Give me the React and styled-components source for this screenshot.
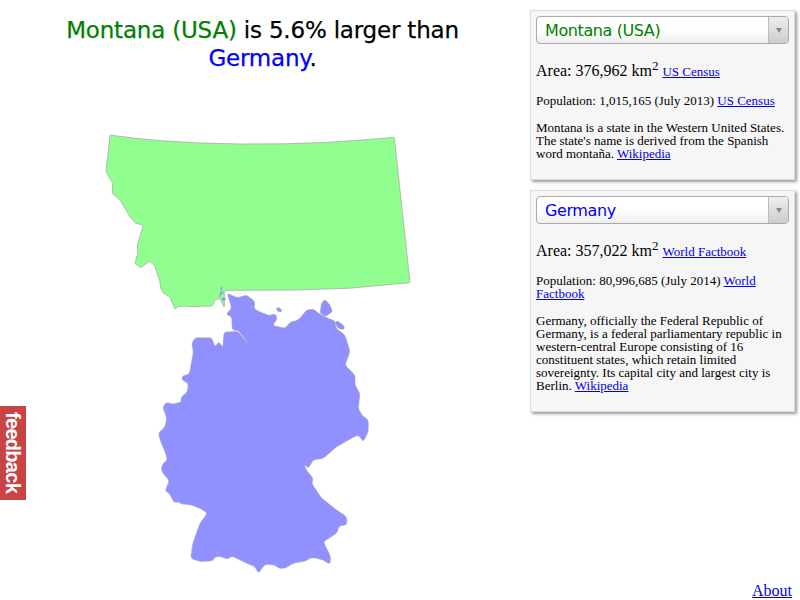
import React from "react";
import styled, { createGlobalStyle } from "styled-components";

const Global = createGlobalStyle`
  html, body { margin: 0; padding: 0; background: #fff; }
  body { font-family: "Liberation Serif", "Times New Roman", serif; color: #000; overflow: hidden; }
`;
const Page = styled.div`
  position: relative;
  width: 800px;
  height: 600px;
  display: flex;
  flex-direction: column;
`;
const Main = styled.div`
  flex: 1;
  min-height: 0;
  display: flex;
  align-items: flex-start;
`;
const MapColumn = styled.div`
  width: 525px;
  flex: none;
`;
const Heading = styled.h1`
  margin: 0;
  padding: 16px 30px 0;
  height: 84px;
  box-sizing: border-box;
  text-align: center;
  font: normal 23px/28px "DejaVu Sans", sans-serif;
  letter-spacing: -0.2px;
  -webkit-text-stroke: 0.25px currentColor;
`;
const Name = styled.span`
  color: ${(p) => p.$color};
`;
const MapSvg = styled.svg`
  display: block;
  width: 525px;
  height: 500px;
`;
const Sidebar = styled.div`
  flex: none;
  width: 265px;
  padding-top: 10px;
  margin-left: 5px;
  display: flex;
  flex-direction: column;
  gap: 10px;
`;
const Panel = styled.section`
  box-sizing: border-box;
  width: 265px;
  height: ${(p) => p.$height}px;
  padding: 5px;
  background: #f6f6f6;
  border: 1px solid #ddd;
  box-shadow: 2px 2px 3px #999;
`;
const Select = styled.div`
  box-sizing: border-box;
  height: 28px;
  display: flex;
  border: 1px solid #aaa;
  border-radius: 4px;
  background: linear-gradient(#fff 50%, #eee);
  overflow: hidden;
`;
const SelectLabel = styled.span`
  flex: 1;
  padding-left: 8px;
  font: 16px/27px "DejaVu Sans", sans-serif;
  letter-spacing: -0.4px;
  color: ${(p) => p.$color};
`;
const SelectArrow = styled.span`
  flex: none;
  width: 19px;
  border-left: 1px solid #bbb;
  background: linear-gradient(#eee, #ccc);
  display: flex;
  align-items: center;
  justify-content: center;
  &::after {
    content: "";
    border-left: 3px solid transparent;
    border-right: 3px solid transparent;
    border-top: 5px solid #888;
  }
`;
const Area = styled.p`
  margin: 18px 0 0;
  font-size: 16px;
  line-height: 18px;
  sup { font-size: 13px; line-height: 0; }
  a { font-size: 13px; }
`;
const Text = styled.p`
  margin: ${(p) => p.$top}px 0 0;
  font-size: 13px;
  line-height: 13px;
`;
const Link = styled.a`
  color: #00e;
  text-decoration: underline;
`;
const Footer = styled.div`
  flex: none;
  height: 20px;
  padding-right: 8px;
  text-align: right;
  font-size: 16px;
  line-height: 22px;
`;
const FeedbackTab = styled.a`
  position: absolute;
  left: 0;
  top: 406px;
  width: 26px;
  height: 94px;
  background: #c84444;
  color: #fff;
  font: bold 20px/26px "Liberation Sans", sans-serif;
  letter-spacing: -0.7px;
  text-align: center;
  writing-mode: vertical-rl;
`;

const parse = (s) => s.trim().split(/\s+/).map((p) => p.split(",").map(Number));
// Closed outline whose corners are rounded by at most r, as on the reference's anti-aliased coast lines.
const outline = (s, r) => {
  const pts = parse(s);
  const n = pts.length;
  const toward = (a, b) => {
    const d = Math.hypot(b[0] - a[0], b[1] - a[1]);
    const t = Math.min(r, d / 2) / (d || 1);
    return [a[0] + (b[0] - a[0]) * t, a[1] + (b[1] - a[1]) * t];
  };
  let d = "";
  pts.forEach((p, i) => {
    const a = toward(p, pts[(i + n - 1) % n]);
    const b = toward(p, pts[(i + 1) % n]);
    d += `${i ? "L" : "M"}${a[0].toFixed(1)} ${a[1].toFixed(1)}Q${p[0]} ${p[1]} ${b[0].toFixed(1)} ${b[1].toFixed(1)}`;
  });
  return d + "Z";
};

const montana = "110,135 135,138.3 161.7,140.7 200,143 241.7,144 285,143.8 328,142.3 362,140 394.3,137.3 410,282.7 348.3,288.3 295,290 224.3,290.3 224.3,307.7 220,298.3 215,300 212.3,306 190,306.7 188,306 178,306.7 175,309.3 170,296.7 163.3,293.3 160.7,288.3 160,281.7 154.3,265 149.3,261 141,267.7 135,263.3 137.7,253.3 137.3,245 143.3,225 135.7,223.3 130,216.7 120,200 112.3,193.3 112.7,183.3 106,171.7";
const germany = "227.3,293.3 237.3,297.7 246.7,295 255,301.7 254,309 263.3,313.3 270,315.7 275,313.3 277.3,318.3 272.7,325.7 278.3,326.7 285,328.3 290,322.3 298.3,320 306.7,310 313.3,309 320,314.3 326.7,317.7 335,321 336,328.3 345,335 350,351.7 345,365 355,375 355,385 360,393.3 358.3,408.3 361.7,415 368.3,420 368.3,431.7 363.3,441.7 358.3,435 353.3,437.3 336.7,446.7 323.3,458.3 313.3,460 308.3,468.3 304,464 306.7,470.7 313.3,478.3 311.7,483.3 321.7,498.3 336.7,510 346.7,516.7 346.7,525 339.3,525.7 336.7,533.3 323.3,541.7 328.3,551.7 330.7,556.7 330,564.3 323.3,560 316.7,558.3 310,557.7 306.7,560.7 293.3,563.3 285,568.3 278.3,568.3 275,565 265,564.3 258.3,573.3 255,566.7 246.7,563.3 231.7,556 228.3,559.3 218.3,556 213.3,558.3 213.3,560.7 200,561.7 190.7,558.3 192.7,543.3 200,523.3 207.3,513.3 203.3,510 191.7,505 181.7,504 178.3,501.7 174,502.7 169.3,493.3 165,491 169.3,480.7 161.7,471.7 161.7,465 167.3,460 165,451.7 160.7,441.7 158.3,433.3 165,426.7 166.7,418.3 162.7,406.7 166.7,402.3 172.7,404.3 181.7,401.7 180.7,397.7 187.3,391.7 188.3,383.3 181.7,380 182.3,375.7 189.3,374.3 193.3,351.7 191.7,343.3 195,337.7 211.7,337.7 215,346.7 219,341.7 222.7,347.7 224,332 238,331.5 249,344.3 238.5,330.5 232.3,330 231.7,316.7 226,314.3 231.7,308.3";
const islands = [
  "276.5,307.5 280,308 282,311 281,312 277,311",
  "320,313 321.5,303 325,299.5 330,305 332.5,311.5 328,315 325,316.5",
  "335,322 338,321 344,326 344.5,329 341,329.5 337,327",
];

const Map = () => (
  <MapSvg viewBox="0 84 525 500">
    <g fill="#9090ff" stroke="#aaa" strokeWidth="0.5">
      <path d={outline(germany, 2.5)} />
      {islands.map((p) => <path key={p} d={outline(p, 1.5)} />)}
    </g>
    <path d={outline(montana, 1.2)} fill="#90ff90" stroke="#aaa" strokeWidth="0.8" />
    <g fill="#9090ff">
      <polygon points="221.5,286.5 222.5,287 221,293 224,291.5 224,292.5 220.5,295 219.8,297.5 219,297" />
      <ellipse cx="223.7" cy="299" rx="2" ry="1.5" />
    </g>
  </MapSvg>
);

export default function App() {
  return (
    <Page>
      <Global />
      <Main>
        <MapColumn>
          <Heading>
            <Name $color="#008000">Montana (USA)</Name> is 5.6% larger than <Name $color="#0000ff">Germany</Name>.
          </Heading>
          <Map />
        </MapColumn>
        <Sidebar>
          <Panel $height={170}>
            <Select>
              <SelectLabel $color="#008000">Montana (USA)</SelectLabel>
              <SelectArrow />
            </Select>
            <Area>Area: 376,962 km<sup>2</sup> <Link href="#">US Census</Link></Area>
            <Text $top={13}>Population: 1,015,165 (July 2013) <Link href="#">US Census</Link></Text>
            <Text $top={14}>Montana is a state in the Western United States. The state's name is derived from the Spanish word montaña. <Link href="#">Wikipedia</Link></Text>
          </Panel>
          <Panel $height={222}>
            <Select>
              <SelectLabel $color="#0000ff">Germany</SelectLabel>
              <SelectArrow />
            </Select>
            <Area>Area: 357,022 km<sup>2</sup> <Link href="#">World Factbook</Link></Area>
            <Text $top={13}>Population: 80,996,685 (July 2014) <Link href="#">World Factbook</Link></Text>
            <Text $top={14}>Germany, officially the Federal Republic of Germany, is a federal parliamentary republic in western-central Europe consisting of 16 constituent states, which retain limited sovereignty. Its capital city and largest city is Berlin. <Link href="#">Wikipedia</Link></Text>
          </Panel>
        </Sidebar>
      </Main>
      <Footer><Link href="#">About</Link></Footer>
      <FeedbackTab>feedback</FeedbackTab>
    </Page>
  );
}
